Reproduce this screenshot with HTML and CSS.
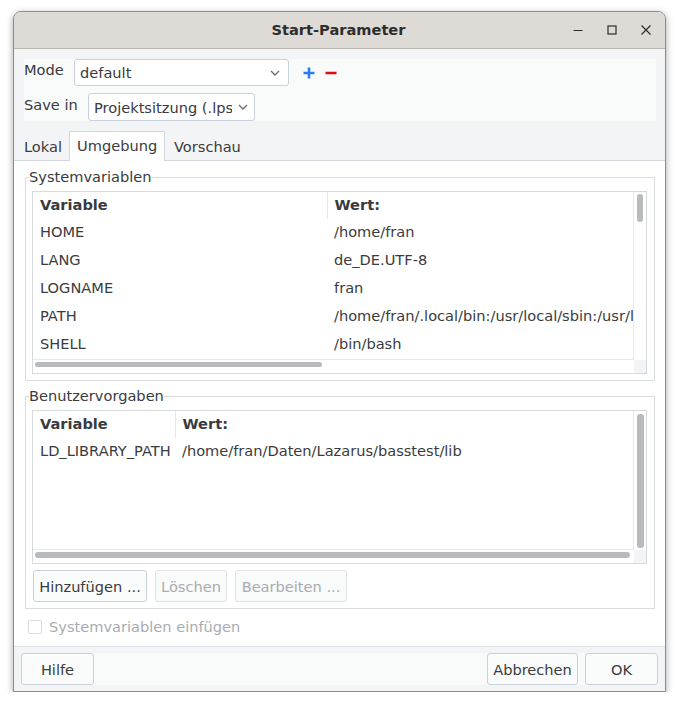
FILE: index.html
```html
<!DOCTYPE html>
<html lang="de">
<head>
    <meta charset="UTF-8">
    <title>Start-Parameter</title>
    <link rel="stylesheet" href="styles.css">
</head>
<body>

    <div class="ventana">
        <div class="titulo">
            <span class="titulo-texto">Start-Parameter</span>
            <div class="controles">
                <svg width="12" height="12" viewBox="0 0 12 12"><path d="M1.5 6.5h9" stroke="#2e2e2e" stroke-width="1.2"/></svg>
                <svg width="12" height="12" viewBox="0 0 12 12"><rect x="2" y="2" width="8" height="8" fill="none" stroke="#2e2e2e" stroke-width="1.2"/></svg>
                <svg width="12" height="12" viewBox="0 0 12 12"><path d="M1.5 1.5l9 9M10.5 1.5l-9 9" stroke="#2e2e2e" stroke-width="1.2"/></svg>
            </div>
        </div>

        <div class="panel-superior">
            <div class="fila">
                <span class="etiqueta etiqueta-mode">Mode</span>
                <div class="combo combo-mode">
                    <span>default</span>
                    <svg class="flecha" width="10" height="6" viewBox="0 0 10 6"><path d="M1 1l4 4 4-4" fill="none" stroke="#6b6e73" stroke-width="1.4"/></svg>
                </div>
                <svg class="icono-mas" width="12" height="12" viewBox="0 0 12 12"><path d="M6 0.5v11M0.5 6h11" stroke="#2b7cf0" stroke-width="2.6"/></svg>
                <svg class="icono-menos" width="12" height="12" viewBox="0 0 12 12"><path d="M0.5 6h11" stroke="#e60b0b" stroke-width="2.6"/></svg>
            </div>
            <div class="fila">
                <span class="etiqueta etiqueta-save">Save in</span>
                <div class="combo combo-save">
                    <span>Projektsitzung (.lps</span>
                    <svg class="flecha" width="10" height="6" viewBox="0 0 10 6"><path d="M1 1l4 4 4-4" fill="none" stroke="#6b6e73" stroke-width="1.4"/></svg>
                </div>
            </div>
        </div>

        <div class="pestanas">
            <div class="pestana pestana-lokal">Lokal</div>
            <div class="pestana pestana-umgebung activa">Umgebung</div>
            <div class="pestana">Vorschau</div>
        </div>

        <div class="pagina">
            <fieldset class="grupo grupo-sistema">
                <legend>Systemvariablen</legend>
                <div class="lista lista-sistema">
                    <div class="lista-contenido">
                        <table>
                            <thead>
                                <tr><th class="col1">Variable</th><th>Wert:</th></tr>
                            </thead>
                            <tbody>
                                <tr><td class="col1">HOME</td><td>/home/fran</td></tr>
                                <tr><td class="col1">LANG</td><td>de_DE.UTF-8</td></tr>
                                <tr><td class="col1">LOGNAME</td><td>fran</td></tr>
                                <tr><td class="col1">PATH</td><td>/home/fran/.local/bin:/usr/local/sbin:/usr/local/bin</td></tr>
                                <tr><td class="col1">SHELL</td><td>/bin/bash</td></tr>
                            </tbody>
                        </table>
                    </div>
                    <div class="barra-v"><div class="pulgar-v pulgar-corto"></div></div>
                    <div class="barra-h"><div class="pulgar-h pulgar-sistema"></div></div>
                    <div class="esquina"></div>
                </div>
            </fieldset>

            <fieldset class="grupo grupo-usuario">
                <legend>Benutzervorgaben</legend>
                <div class="lista lista-usuario">
                    <div class="lista-contenido">
                        <table>
                            <thead>
                                <tr><th class="col1 col1-corta">Variable</th><th>Wert:</th></tr>
                            </thead>
                            <tbody>
                                <tr><td class="col1 col1-corta">LD_LIBRARY_PATH</td><td>/home/fran/Daten/Lazarus/basstest/lib</td></tr>
                            </tbody>
                        </table>
                    </div>
                    <div class="barra-v"><div class="pulgar-v pulgar-largo"></div></div>
                    <div class="barra-h"><div class="pulgar-h pulgar-usuario"></div></div>
                    <div class="esquina"></div>
                </div>
                <div class="botones-lista">
                    <button class="boton btn-hinzu">Hinzufügen ...</button>
                    <button class="boton btn-loeschen" disabled>Löschen</button>
                    <button class="boton btn-bearbeiten" disabled>Bearbeiten ...</button>
                </div>
            </fieldset>

            <label class="casilla">
                <span class="cuadro"></span>
                Systemvariablen einfügen
            </label>
        </div>

        <div class="pie">
            <div class="pie-interior">
                <button class="boton btn-hilfe">Hilfe</button>
                <span class="espacio"></span>
                <button class="boton btn-abbrechen">Abbrechen</button>
                <button class="boton btn-ok">OK</button>
            </div>
        </div>
    </div>

</body>
</html>
```

FILE: styles.css
```css
* {
    box-sizing: border-box;
}

body {
    margin: 0;
    background-color: #ffffff;
    font-family: "DejaVu Sans", "Liberation Sans", sans-serif;
    font-size: 14.6px;
    color: #3a3b3e;
}

.ventana {
    margin: 11px 0 0 13px;
    width: 653px;
    height: 681px;
    border: 1px solid #8c8c8c;
    border-radius: 8px 8px 0 0;
    background-color: #f3f4f6;
    box-shadow: 0 2px 7px rgba(0, 0, 0, 0.35);
    display: flex;
    flex-direction: column;
    overflow: hidden;
}

/* Barra de titulo */
.titulo {
    height: 37px;
    flex-shrink: 0;
    background-color: #dedad6;
    border-bottom: 1px solid #b9b5b1;
    display: flex;
    align-items: center;
    justify-content: center;
    position: relative;
}

.titulo-texto {
    font-weight: bold;
    color: #2e2e2e;
    margin-right: 2px;
    margin-top: -1px;
}

.controles {
    position: absolute;
    right: 13px;
    top: 12px;
    display: flex;
    gap: 22px;
}

/* Panel Mode / Save in */
.panel-superior {
    margin: 10px 9px 0 10px;
    height: 62px;
    background-color: #f9fafa;
    display: flex;
    flex-direction: column;
    gap: 7px;
}

.fila {
    display: flex;
    align-items: center;
}

.etiqueta {
    align-self: flex-start;
    line-height: 22px;
}

.etiqueta-mode {
    width: 50px;
}

.etiqueta-save {
    width: 64px;
    line-height: 24px;
}

.combo {
    height: 27px;
    background-color: #ffffff;
    border: 1px solid #c9d0de;
    border-radius: 3px;
    display: flex;
    align-items: center;
    justify-content: space-between;
    padding: 0 8px 0 5px;
    white-space: nowrap;
    overflow: hidden;
}

.combo-mode {
    width: 215px;
}

.combo-save {
    width: 167px;
    height: 28px;
    padding-right: 6px;
}

.combo-save span {
    overflow: hidden;
    width: 138px;
}

.flecha {
    flex-shrink: 0;
}

.icono-mas {
    margin-left: 14px;
}

.icono-menos {
    margin-left: 10px;
}

/* Pestanas */
.pestanas {
    margin-top: 10px;
    height: 29px;
    display: flex;
    padding-left: 1px;
    position: relative;
    z-index: 1;
}

.pestana {
    padding: 0 8px;
    line-height: 29px;
    border: 1px solid transparent;
    border-bottom: none;
    white-space: nowrap;
}

.pestana-lokal {
    width: 54px;
}

.pestana.activa {
    background-color: #ffffff;
    border-color: #d3d6db;
    line-height: 28px;
    height: 30px;
    width: 96px;
    padding: 0 0 0 7px;
}

.pagina {
    flex: 1;
    background-color: #ffffff;
    border-top: 1px solid #d3d6db;
    border-bottom: 1px solid #dde0e4;
    padding: 8px 10px 0 11px;
}

/* Grupos */
.grupo {
    margin: 0;
    padding: 0 7px 6px 6px;
    border: 1px solid #dadcdf;
    min-width: 0;
}

.grupo legend {
    padding: 0;
    margin-left: -3px;
    line-height: 16px;
}

.grupo-usuario {
    margin-top: 7px;
}

.lista {
    margin-top: 6px;
    border: 1px solid #d7dadd;
    display: grid;
    grid-template-columns: 1fr 12px;
    grid-template-rows: 1fr 13px;
}

.lista-sistema {
    height: 183px;
}

.lista-usuario {
    height: 154px;
}

.lista-contenido {
    overflow: hidden;
    border-right: 1px solid #e8e9eb;
    border-bottom: 1px solid #e8e9eb;
}

table {
    border-collapse: collapse;
    white-space: nowrap;
}

th {
    text-align: left;
    font-weight: bold;
    height: 27px;
    padding: 0 7px 2px;
}

th.col1 {
    border-right: 1px solid #e6e7e9;
}

td {
    height: 28px;
    padding: 0 7px 3px;
}

.col1 {
    width: 294px;
    min-width: 294px;
}

.col1-corta {
    width: 142px;
    min-width: 142px;
    max-width: 142px;
    padding-right: 2px;
    overflow: hidden;
}

.pulgar-v {
    margin: 2px 0 0 3px;
    width: 6px;
    background-color: #b9babd;
    border-radius: 3px;
}

.pulgar-corto {
    height: 28px;
}

.pulgar-largo {
    width: 7px;
    height: 134px;
    margin-top: 3px;
}

.barra-h {
    padding: 2px 0 0 2px;
}

.pulgar-h {
    height: 5px;
    background-color: #b9babd;
    border-radius: 3px;
}

.pulgar-sistema {
    width: 287px;
}

.pulgar-usuario {
    width: 595px;
    height: 6px;
}

.esquina {
    background-color: #f3f4f5;
}

/* Botones */
.boton {
    font-family: "DejaVu Sans", "Liberation Sans", sans-serif;
    font-size: 14.6px;
    color: #3a3b3e;
    background-color: #fafbfb;
    border: 1px solid #c9d0dc;
    border-radius: 3px;
    padding: 0;
    height: 32px;
}

.boton:disabled {
    color: #a9acb1;
    border-color: #e1e3e6;
    background-color: #f9fafa;
}

.botones-lista {
    margin-top: 6px;
    display: flex;
    gap: 8px;
    padding-left: 1px;
}

.btn-hinzu {
    width: 114px;
}

.btn-loeschen {
    width: 72px;
}

.btn-bearbeiten {
    width: 112px;
}

.casilla {
    display: flex;
    align-items: center;
    gap: 7px;
    margin: 9px 0 0 3px;
    color: #a9acb1;
}

.cuadro {
    width: 14px;
    height: 14px;
    border: 1px solid #d9dbdf;
    border-radius: 2px;
    background-color: #ffffff;
}

/* Pie */
.pie {
    height: 44px;
    flex-shrink: 0;
    padding: 6px 7px 0 7px;
}

.pie-interior {
    display: flex;
    background-color: #f9fafa;
}

.espacio {
    flex: 1;
}

.btn-hilfe {
    width: 73px;
}

.btn-abbrechen {
    width: 91px;
    margin-right: 7px;
}

.btn-ok {
    width: 73px;
}
```
